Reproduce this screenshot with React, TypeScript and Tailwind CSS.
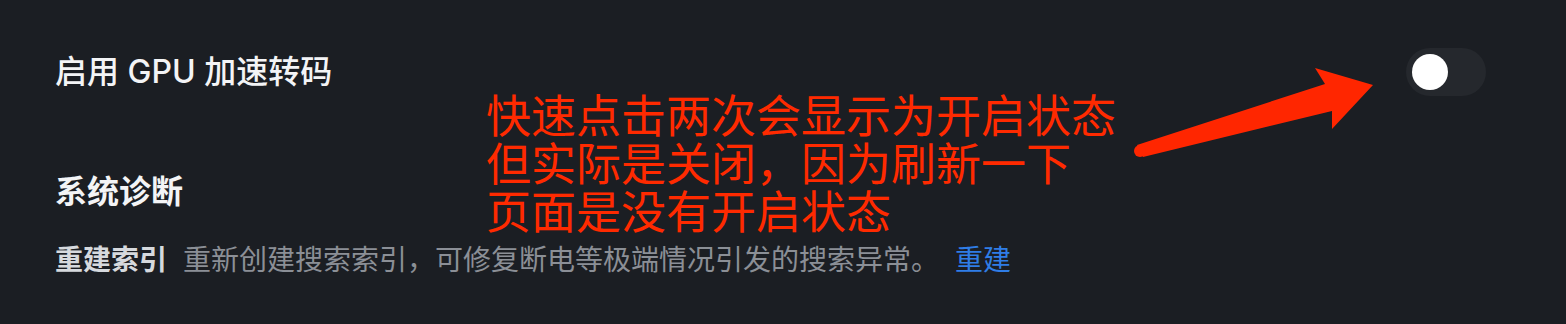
const font = { fontFamily: '"Inter", "Noto Sans CJK SC", sans-serif' };

function Toggle({ on }: { on: boolean }) {
  return (
    <button
      type="button"
      aria-pressed={on}
      className="flex h-[48px] w-[80px] items-center rounded-full bg-[#25282d] px-[6px]"
    >
      <span className="h-[36px] w-[36px] rounded-full bg-white" />
    </button>
  );
}

function Annotation() {
  return (
    <div className="pointer-events-none absolute inset-0">
      <div
        className="absolute left-[486px] top-[90px] text-[45px] leading-[48px] text-[#ff2a00]"
        style={{ fontFamily: '"Noto Sans CJK SC", sans-serif' }}
      >
        <p>快速点击两次会显示为开启状态</p>
        <p>但实际是关闭，因为刷新一下</p>
        <p>页面是没有开启状态</p>
      </div>
      <svg className="absolute inset-0" width="1566" height="324">
        <polygon
          fill="#ff2600"
          points="1137,145 1325,84 1315,68 1373,85 1332,129 1332,111 1143,157"
        />
        <circle cx="1140" cy="151" r="6" fill="#ff2600" />
      </svg>
    </div>
  );
}

export default function App() {
  return (
    <div className="relative h-[324px] w-full bg-[#1b1e23] pl-[55px] pr-[80px] pt-[48px]" style={font}>
      <div className="flex h-[48px] items-center justify-between">
        <span className="text-[32px] font-medium text-[#f3f4f6]">启用 GPU 加速转码</span>
        <Toggle on={false} />
      </div>

      <h2 className="mt-[76px] text-[32px] font-semibold leading-[40px] text-[#f3f4f6]">系统诊断</h2>

      <div className="mt-[28px] flex items-center text-[28px] leading-[40px]">
        <span className="font-semibold text-[#d6d9dd]">重建索引</span>
        <span className="ml-[16px] text-[#8b8f96]">重新创建搜索索引，可修复断电等极端情况引发的搜索异常。</span>
        <a className="ml-[16px] text-[#2f7de6]" href="#">重建</a>
      </div>

      <Annotation />
    </div>
  );
}
